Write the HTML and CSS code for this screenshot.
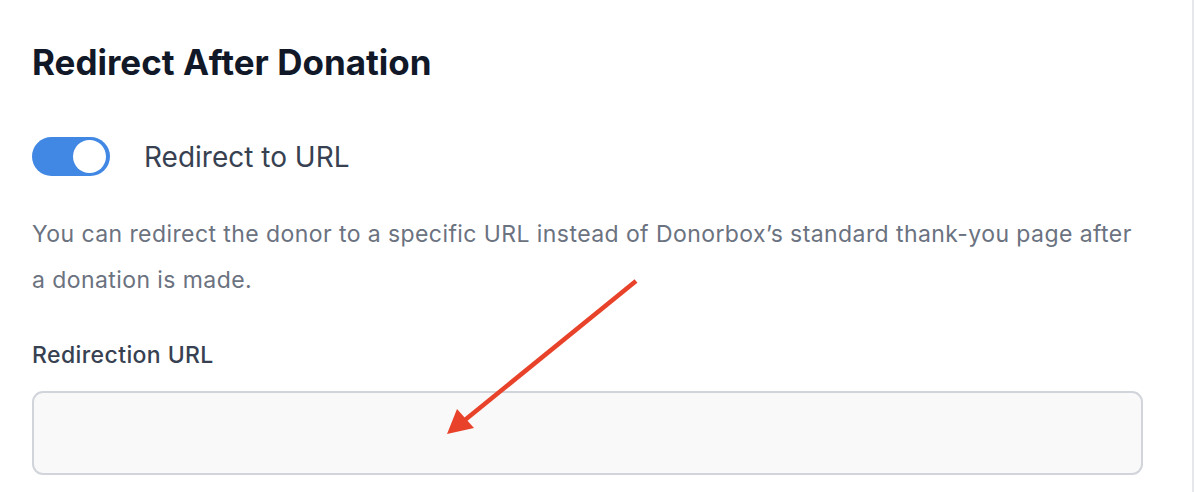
FILE: index.html
```html
<!DOCTYPE html>
<html lang="en">
<head>
<meta charset="utf-8">
<title>Redirect After Donation</title>
<link rel="stylesheet" href="styles.css">
</head>
<body>
<div class="panel">
  <section class="settings">
    <h2 class="settings-title">Redirect After Donation</h2>

    <label class="switch-row">
      <span class="switch is-on"><span class="switch-knob"></span></span>
      <span class="switch-label">Redirect to URL</span>
    </label>

    <p class="settings-help">You can redirect the donor to a specific URL instead of Donorbox’s standard thank-you page after a donation is made.</p>

    <div class="field">
      <label class="field-label" for="redirect-url">Redirection URL</label>
      <input class="field-input" id="redirect-url" type="text">
    </div>
  </section>

  <svg class="callout-arrow" width="220" height="180" viewBox="0 0 220 180" aria-hidden="true">
    <line x1="210" y1="6" x2="34" y2="149" stroke="#e8432a" stroke-width="4.5" stroke-linecap="butt"/>
    <polygon points="21,159 31,134 48,153" fill="#e8432a"/>
  </svg>
</div>
</body>
</html>
```

FILE: styles.css
```css
* { box-sizing: border-box; }

html, body {
  margin: 0;
  background: #ffffff;
}

body {
  font-family: Inter, "Noto Sans", "Liberation Sans", sans-serif;
  color: #111827;
}

.panel {
  position: relative;
  width: 1194px;
  height: 492px;
  border-right: 2px solid #e5e7eb;
  padding: 0 49px 0 32px;
}

.settings {
  padding-top: 41px;
}

.settings-title {
  margin: 0;
  font-size: 35px;
  line-height: 42px;
  font-weight: 700;
  color: #111827;
}

.switch-row {
  display: flex;
  align-items: center;
  gap: 34px;
  margin-top: 54px;
}

.switch {
  position: relative;
  display: block;
  flex: none;
  width: 78px;
  height: 39px;
  border-radius: 20px;
  background: #d1d5db;
}

.switch.is-on {
  background: #4188e4;
}

.switch-knob {
  position: absolute;
  top: 3px;
  right: 4px;
  width: 33px;
  height: 33px;
  border-radius: 50%;
  background: #ffffff;
}

.switch-label {
  font-size: 28px;
  line-height: 34px;
  font-weight: 400;
  color: #374151;
}

.settings-help {
  margin: 35px 0 0;
  font-size: 23px;
  line-height: 46px;
  letter-spacing: 0.42px;
  color: #6b7280;
}

.field {
  margin-top: 38px;
}

.field-label {
  display: block;
  font-size: 23px;
  line-height: 28px;
  font-weight: 500;
  letter-spacing: 0.4px;
  color: #374151;
}

.field-input {
  display: block;
  width: 100%;
  height: 84px;
  margin-top: 22px;
  border: 2px solid #d1d5db;
  border-radius: 11px;
  background: #f9f9f9;
  font: inherit;
  outline: none;
}

.callout-arrow {
  position: absolute;
  left: 426px;
  top: 275px;
}
```
